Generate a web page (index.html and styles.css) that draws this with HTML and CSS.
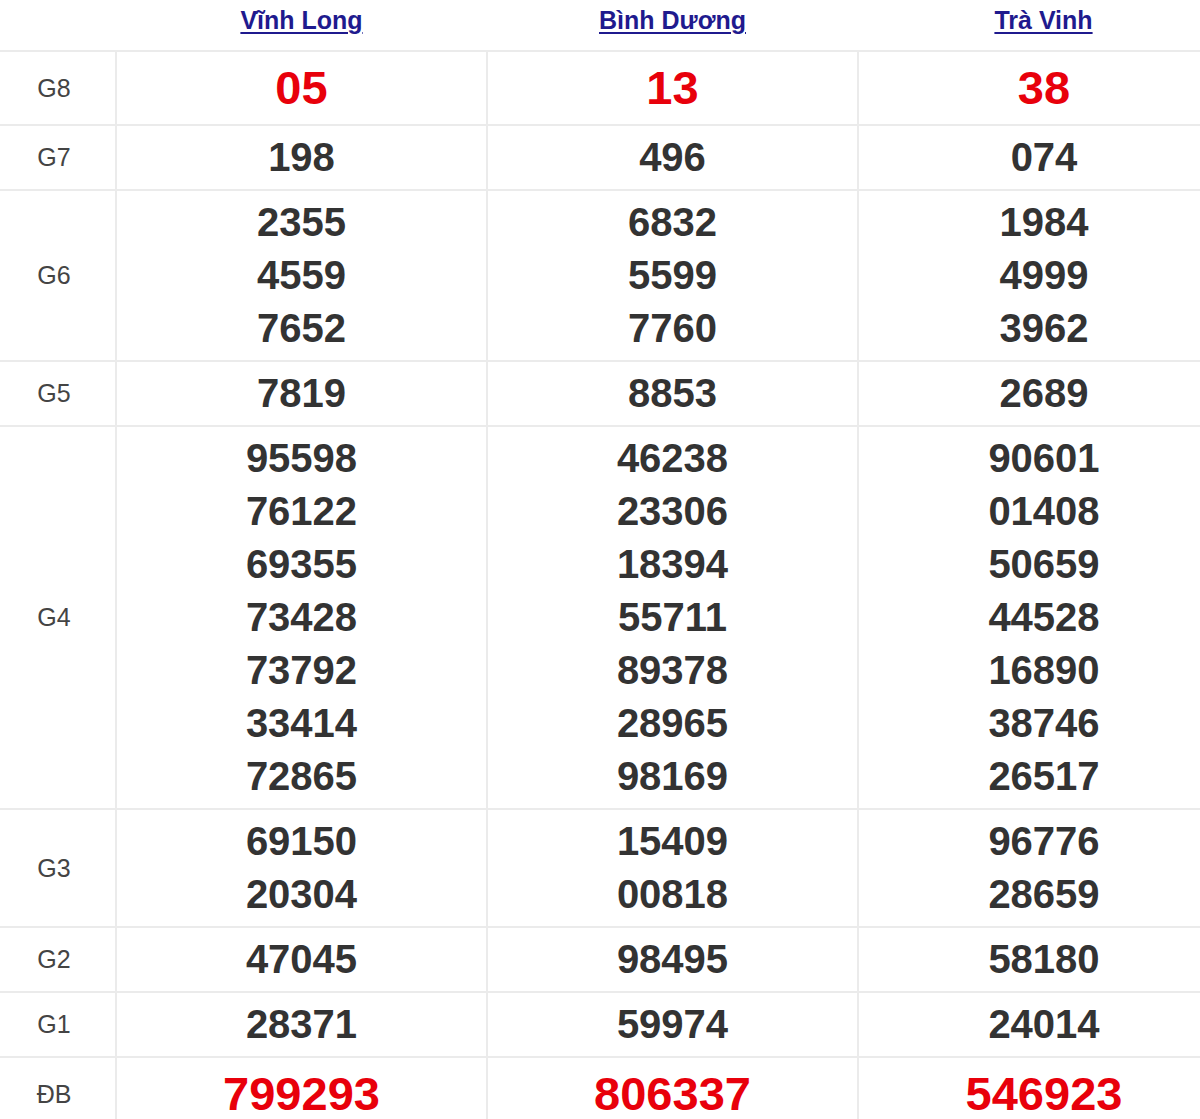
FILE: index.html
```html
<!DOCTYPE html>
<html lang="vi">
<head>
<meta charset="utf-8">
<title>Kết quả xổ số</title>
<link rel="stylesheet" href="styles.css">
</head>
<body>
<div class="frame">
<table class="kq">
  <colgroup>
    <col class="c-label">
    <col class="c-prov">
    <col class="c-prov">
    <col class="c-prov">
  </colgroup>
  <thead>
    <tr>
      <th></th>
      <th><a href="#">Vĩnh Long</a></th>
      <th><a href="#">Bình Dương</a></th>
      <th><a href="#">Trà Vinh</a></th>
    </tr>
  </thead>
  <tbody>
    <tr class="big">
      <td class="lbl">G8</td>
      <td><div>05</div></td>
      <td><div>13</div></td>
      <td><div>38</div></td>
    </tr>
    <tr>
      <td class="lbl">G7</td>
      <td><div>198</div></td>
      <td><div>496</div></td>
      <td><div>074</div></td>
    </tr>
    <tr>
      <td class="lbl">G6</td>
      <td><div>2355</div><div>4559</div><div>7652</div></td>
      <td><div>6832</div><div>5599</div><div>7760</div></td>
      <td><div>1984</div><div>4999</div><div>3962</div></td>
    </tr>
    <tr>
      <td class="lbl">G5</td>
      <td><div>7819</div></td>
      <td><div>8853</div></td>
      <td><div>2689</div></td>
    </tr>
    <tr>
      <td class="lbl">G4</td>
      <td><div>95598</div><div>76122</div><div>69355</div><div>73428</div><div>73792</div><div>33414</div><div>72865</div></td>
      <td><div>46238</div><div>23306</div><div>18394</div><div>55711</div><div>89378</div><div>28965</div><div>98169</div></td>
      <td><div>90601</div><div>01408</div><div>50659</div><div>44528</div><div>16890</div><div>38746</div><div>26517</div></td>
    </tr>
    <tr>
      <td class="lbl">G3</td>
      <td><div>69150</div><div>20304</div></td>
      <td><div>15409</div><div>00818</div></td>
      <td><div>96776</div><div>28659</div></td>
    </tr>
    <tr>
      <td class="lbl">G2</td>
      <td><div>47045</div></td>
      <td><div>98495</div></td>
      <td><div>58180</div></td>
    </tr>
    <tr>
      <td class="lbl">G1</td>
      <td><div>28371</div></td>
      <td><div>59974</div></td>
      <td><div>24014</div></td>
    </tr>
    <tr class="big">
      <td class="lbl">ĐB</td>
      <td><div>799293</div></td>
      <td><div>806337</div></td>
      <td><div>546923</div></td>
    </tr>
  </tbody>
</table>
</div>
</body>
</html>
```
FILE: styles.css
```css
html, body {
  margin: 0;
  padding: 0;
  background: #ffffff;
}

body {
  overflow: hidden;
  font-family: "Liberation Sans", Arial, sans-serif;
}

.frame {
  width: 1200px;
  height: 1119px;
  overflow: hidden;
}

.kq {
  border-collapse: collapse;
  table-layout: fixed;
  width: 1236px;
  margin-left: -7px;
}

.c-label {
  width: 123px;
}

.c-prov {
  width: 371px;
}

.kq th {
  padding: 0 0 10px;
  vertical-align: middle;
  font-size: 25px;
  font-weight: bold;
  line-height: 40px;
  border-bottom: 2px solid #ebebeb;
}

.kq th a {
  color: #1f1a8e;
  text-decoration: underline;
  text-decoration-thickness: 2px;
  text-underline-offset: 3px;
}

.kq td {
  padding: 5px 0;
  text-align: center;
  vertical-align: middle;
  border: 2px solid #ebebeb;
  border-top: none;
  font-size: 40px;
  font-weight: bold;
  line-height: 53px;
  color: #333333;
}

.kq td:first-child {
  border-left: none;
}

.kq td:last-child {
  border-right: none;
}

.kq td.lbl {
  font-size: 25px;
  font-weight: normal;
  color: #444444;
  padding-left: 0;
}

.kq tr.big td {
  font-size: 47px;
  line-height: 62px;
  color: #e8000b;
}

.kq tr.big td.lbl {
  font-size: 25px;
  color: #444444;
}
```
